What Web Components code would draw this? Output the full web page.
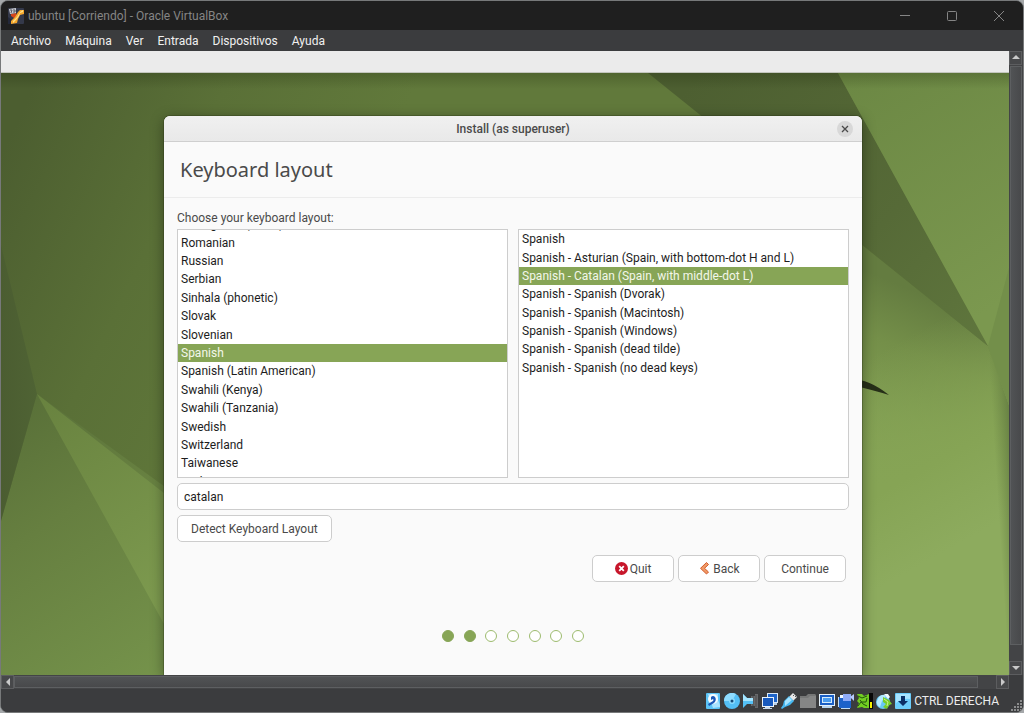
<!DOCTYPE html>
<html lang="es">
<head>
<meta charset="utf-8">
<meta name="viewport" content="width=device-width, initial-scale=1">
<title>ubuntu [Corriendo] - Oracle VirtualBox</title>
<style>
    html, body {
        height: 100%;
        margin: 0;
    }

    body {
        background: #a5a8aa;
        font-family: Roboto, "Open Sans", sans-serif;
        font-size: 12px;
    }
</style>
</head>
<body>

<vm-window>
    <vm-titlebar slot="top">ubuntu [Corriendo] - Oracle VirtualBox</vm-titlebar>
    <vm-menubar slot="top">
        <a href="#archivo">Archivo</a>
        <a href="#maquina">Máquina</a>
        <a href="#ver">Ver</a>
        <a href="#entrada">Entrada</a>
        <a href="#dispositivos">Dispositivos</a>
        <a href="#ayuda">Ayuda</a>
    </vm-menubar>

    <guest-desktop>
        <install-dialog>
            <span slot="title">Install (as superuser)</span>
            <span slot="heading">Keyboard layout</span>
            <keyboard-page></keyboard-page>
        </install-dialog>
    </guest-desktop>

    <vm-scrollbar slot="vbar" orientation="vertical"></vm-scrollbar>
    <vm-scrollbar slot="hbar" orientation="horizontal"></vm-scrollbar>
    <vm-statusbar slot="bottom">CTRL DERECHA</vm-statusbar>
</vm-window>

<script>
/* Host window: frame, guest viewport and both scrollbars */
class VmWindow extends HTMLElement {
    connectedCallback() {
        this.attachShadow({ mode: 'open' });
        this.shadowRoot.innerHTML = `
            <style>
                :host {
                    display: flex;
                    flex-direction: column;
                    box-sizing: border-box;
                    height: 100vh;
                    min-height: 640px;
                    border: 1px solid #77797a;
                    border-radius: 8px;
                    overflow: hidden;
                    background: #3b3c3e;
                }

                .viewport {
                    flex: 1;
                    min-height: 0;
                    display: grid;
                    grid-template-columns: minmax(0, 1fr) 14px;
                    grid-template-rows: minmax(0, 1fr) 14px;
                }
            </style>
            <slot name="top"></slot>
            <div class="viewport">
                <slot></slot>
                <slot name="vbar"></slot>
                <slot name="hbar"></slot>
            </div>
            <slot name="bottom"></slot>
        `;
    }
}
customElements.define('vm-window', VmWindow);

class VmTitlebar extends HTMLElement {
    connectedCallback() {
        this.attachShadow({ mode: 'open' });
        this.shadowRoot.innerHTML = `
            <style>
                :host {
                    display: flex;
                    align-items: center;
                    height: 29px;
                    padding: 0 1px 0 7px;
                    background: #1f1f1f;
                    color: #858585;
                }

                .title {
                    flex: 1;
                    margin-left: 4px;
                    white-space: nowrap;
                }

                button {
                    display: flex;
                    align-items: center;
                    justify-content: center;
                    width: 47px;
                    height: 29px;
                    padding: 0;
                    border: 0;
                    background: none;
                    color: #858585;
                }
            </style>
            <svg width="16" height="16" viewBox="0 0 16 16" aria-hidden="true">
                <rect width="16" height="16" rx="1" fill="#34394a"/>
                <path d="M0 9 L5 13 L3 16 H0Z" fill="#23283a"/>
                <path d="M3 6 L8 5 L9 9 L6 10 L3 8Z" fill="#d4471c"/>
                <path d="M16 2 V6 L12 7 L10 11 L9 15 L3 16 L3 13 L7 9 L10 4 L12 2Z" fill="#f5a72c"/>
                <path d="M15 2 L12 4 L9 9 L5 13 L5 15 L8 12 L11 8 L12 5 L15 4Z" fill="#ffe18a"/>
                <path d="M1 1 L8 0 L8 5 L2 6Z" fill="#c9cbd0"/>
                <path d="M2 2 L4 2 L3 5 M5 2 H7 V4 H5" stroke="#555862" fill="none"/>
            </svg>
            <span class="title"><slot></slot></span>
            <button type="button" aria-label="Minimizar">
                <svg width="10" height="10" viewBox="0 0 10 10"><path d="M0 4.500H10" stroke="currentColor" fill="none"/></svg>
            </button>
            <button type="button" aria-label="Maximizar">
                <svg width="10" height="10" viewBox="0 0 10 10"><rect x=".5" y=".5" width="9" height="9" rx="1" stroke="currentColor" fill="none"/></svg>
            </button>
            <button type="button" aria-label="Cerrar">
                <svg width="10" height="10" viewBox="0 0 10 10"><path d="M0 0L10 10M10 0L0 10" stroke="currentColor" fill="none"/></svg>
            </button>
        `;
    }
}
customElements.define('vm-titlebar', VmTitlebar);

class VmMenubar extends HTMLElement {
    connectedCallback() {
        this.attachShadow({ mode: 'open' });
        this.shadowRoot.innerHTML = `
            <style>
                :host {
                    display: block;
                    background: #3b3c3e;
                }

                nav {
                    display: flex;
                    align-items: center;
                    gap: 14px;
                    height: 21px;
                    padding: 0 10px;
                }

                ::slotted(a) {
                    color: #f0f0f0;
                    text-decoration: none;
                }
            </style>
            <nav><slot></slot></nav>
        `;
    }
}
customElements.define('vm-menubar', VmMenubar);

class VmScrollbar extends HTMLElement {
    connectedCallback() {
        const vertical = this.getAttribute('orientation') === 'vertical';
        const back = vertical ? 'M1 6L5 2L9 6Z' : 'M7 1L3 5L7 9Z';
        const next = vertical ? 'M1 3L5 7L9 3Z' : 'M3 1L7 5L3 9Z';

        this.attachShadow({ mode: 'open' });
        this.shadowRoot.innerHTML = `
            <style>
                :host {
                    display: flex;
                    background: #434446;
                }

                :host([orientation="vertical"]) {
                    flex-direction: column;
                }

                button {
                    flex: none;
                    display: flex;
                    align-items: center;
                    justify-content: center;
                    box-sizing: border-box;
                    width: 13px;
                    height: 14px;
                    padding: 0;
                    border: 1px solid #5c5d5f;
                    background: #47484a;
                }

                .thumb {
                    flex: 1;
                    box-sizing: border-box;
                    margin: 1px 0;
                    border: 1px solid #5d5f61;
                    background: linear-gradient(#515355, #48494b);
                }

                :host([orientation="vertical"]) .thumb {
                    margin: 1px;
                    background: linear-gradient(90deg, #515355, #48494b);
                }

                .rest {
                    flex: none;
                    width: 18px;
                    height: 15px;
                }
            </style>
            <button type="button" aria-label="Atrás">
                <svg width="10" height="10" viewBox="0 0 10 10"><path d="${back}" fill="#c9c9c9"/></svg>
            </button>
            <div class="thumb"></div>
            <div class="rest"></div>
            <button type="button" aria-label="Adelante">
                <svg width="10" height="10" viewBox="0 0 10 10"><path d="${next}" fill="#c9c9c9"/></svg>
            </button>
        `;
    }
}
customElements.define('vm-scrollbar', VmScrollbar);

/* Device indicators, left to right */
const DEVICES = [
    // hard disk
    `<rect x="1" y="0" width="14" height="16" rx="1" fill="#5cc4f7"/>
     <path d="M3 1H13V7L15 12V14L8 15Z" fill="#a8e3ff"/>
     <circle cx="8" cy="6" r="5" fill="#f4fbff"/>
     <path d="M6 4Q8 2 10 4Q12 7 9 10L4 13L3 11L8 8Q9 7 8 6L6 7Z" fill="#1b58b8"/>`,
    // optical disc
    `<circle cx="8" cy="8" r="8" fill="#54bff5"/>
     <path d="M0 8A8 8 0 0 1 12 1L8 8Z" fill="#8fdcff"/>
     <circle cx="8" cy="8" r="3" fill="#8cdcff"/>
     <circle cx="8" cy="8" r="1.500" fill="#174b78"/>`,
    // audio
    `<path d="M8 3H12V1H15V15H12V13H8Z" fill="#68696b"/>
     <path d="M10 3V13M13 2V14" stroke="#4b4c4e"/>
     <path d="M0 1L4 5H10V11H4L0 15Z" fill="#55c1f5"/>
     <path d="M0 1L4 5H10V8H0Z" fill="#a5e5ff"/>`,
    // network
    `<rect x="5" y="0" width="11" height="10" fill="#d9e8f7"/>
     <rect x="6" y="1" width="9" height="8" fill="#1e64c8"/>
     <path d="M12 10H15V12H12Z" fill="#b7cfe8"/>
     <rect x="0" y="4" width="12" height="10" fill="#e8f2fb"/>
     <rect x="1" y="5" width="10" height="8" fill="#1759bd"/>
     <path d="M3 14H8V15H10V16H1V15H3Z" fill="#c7d9ec"/>`,
    // usb
    `<path d="M8 4L12 0L16 4L12 8Z" fill="#e7e7e7"/>
     <path d="M12 3L13 2M14 4L15 3" stroke="#555"/>
     <path d="M3 8L8 3L13 8L9 12L4 14L1 16L0 15L2 12Z" fill="#47b8f1"/>
     <path d="M4 8L8 4L11 7L4 13Z" fill="#a6e4ff"/>`,
    // shared folders
    `<path d="M0 3H6L8 1H15L16 2V15H0Z" fill="#757676"/>
     <path d="M0 5H8L10 3H16V15H0Z" fill="#858686"/>`,
    // display
    `<rect x="0" y="1" width="16" height="12" fill="#e4f1fb"/>
     <rect x="1" y="2" width="14" height="10" fill="#1a5fc6"/>
     <rect x="3" y="4" width="10" height="6" fill="#d4ecfd"/>
     <rect x="4" y="5" width="8" height="4" fill="#4a9cf0"/>
     <path d="M3 13H13V15H3Z" fill="#b8d4ee"/>`,
    // recording
    `<rect x="1" y="4" width="12" height="11" fill="#1c62ca"/>
     <path d="M0 4H1V14H0ZM3 15H12V16H3Z" fill="#c3ddf5"/>
     <path d="M2 2H5V5H2Z" fill="#eef7ff"/>
     <rect x="5" y="1" width="8" height="7" fill="#8eabf8"/>
     <path d="M12 4L16 1V8Z" fill="#b8caff"/>`,
    // processor load
    `<path d="M0 1H5L7 3L12 1V15H7L5 14L0 15L2 10L0 8L2 5Z" fill="#72ce22"/>
     <path d="M1 3L5 5L10 3M1 13L4 9L9 9L10 5M3 7L6 11L10 13" stroke="#22540c" fill="none"/>
     <rect x="12" y="0" width="4" height="16" fill="#080808"/>
     <rect x="13" y="9" width="2" height="6" fill="#f6f000"/>`,
    // mouse integration
    `<circle cx="7" cy="9" r="7" fill="#68c9f5"/>
     <path d="M3 4Q7 0 10 3L6 8L4 14Q0 12 1 8Z" fill="#b5eaff"/>
     <path d="M8 1L12 1L14 4L12 6Z" fill="#f0faff"/>
     <path d="M7 4L13 7L16 11L13 12L11 16L7 14L10 11L7 9Z" fill="#77cf28"/>
     <path d="M8 6L12 9L11 13" stroke="#c9f48d" fill="none"/>`,
    // keyboard capture
    `<rect width="16" height="16" rx="1" fill="#6ccdfb"/>
     <path d="M1 1H15V6Q8 5 1 10Z" fill="#a9e4ff"/>
     <path d="M6 3H10V8H13L8 13L3 8H6Z" fill="#0b2f66"/>`
];

class VmStatusbar extends HTMLElement {
    connectedCallback() {
        this.attachShadow({ mode: 'open' });
        this.shadowRoot.innerHTML = `
            <style>
                :host {
                    display: flex;
                    align-items: center;
                    justify-content: flex-end;
                    gap: 3px;
                    box-sizing: border-box;
                    height: 23px;
                    padding-top: 1px;
                    background: #3b3c3e;
                    color: #ececec;
                }

                .grip {
                    align-self: flex-end;
                    margin-left: 9px;
                }
            </style>
            ${DEVICES.map(icon => `<svg width="16" height="16" viewBox="0 0 16 16" aria-hidden="true">${icon}</svg>`).join('')}
            <span><slot></slot></span>
            <svg class="grip" width="12" height="12" viewBox="0 0 12 12" aria-hidden="true">
                <path d="M9 0h2v2h-2zM6 3h2v2h-2zM9 3h2v2h-2zM3 6h2v2h-2zM6 6h2v2h-2zM9 6h2v2h-2zM0 9h2v2h-2zM3 9h2v2h-2zM6 9h2v2h-2zM9 9h2v2h-2z" fill="#8a8b8c"/>
            </svg>
        `;
    }
}
customElements.define('vm-statusbar', VmStatusbar);

/* Guest screen with the faceted green wallpaper */
class GuestDesktop extends HTMLElement {
    connectedCallback() {
        this.attachShadow({ mode: 'open' });
        this.shadowRoot.innerHTML = `
            <style>
                :host {
                    display: flex;
                    flex-direction: column;
                    min-height: 0;
                    overflow: hidden;
                }

                .panel {
                    flex: none;
                    height: 21px;
                    background: #ebebeb;
                    border-bottom: 1px solid #c3c6be;
                }

                .desk {
                    position: relative;
                    flex: 1;
                    min-height: 0;
                    display: flex;
                    padding: 43px 147px 0 163px;
                    overflow: hidden;
                }

                .wallpaper {
                    position: absolute;
                    inset: 0;
                    width: 100%;
                    height: 100%;
                }

                .shade {
                    position: absolute;
                    inset: 0 0 auto;
                    height: 16px;
                    background: linear-gradient(rgba(20, 30, 5, .22), rgba(20, 30, 5, 0));
                }

                ::slotted(*) {
                    flex: 1;
                    min-width: 0;
                }
            </style>
            <div class="panel"></div>
            <div class="desk">
                <svg class="wallpaper" viewBox="0 0 1008 602" preserveAspectRatio="none" aria-hidden="true">
                    <defs>
                        <linearGradient id="base" gradientUnits="userSpaceOnUse" x1="20" y1="40" x2="330" y2="190">
                            <stop offset="0" stop-color="#4c5e30"/>
                            <stop offset=".5" stop-color="#5a7037"/>
                            <stop offset="1" stop-color="#61793b"/>
                        </linearGradient>
                        <linearGradient id="low" gradientUnits="userSpaceOnUse" x1="0" y1="330" x2="170" y2="600">
                            <stop offset="0" stop-color="#586f38"/>
                            <stop offset=".4" stop-color="#667f40"/>
                            <stop offset="1" stop-color="#75934b"/>
                        </linearGradient>
                        <linearGradient id="ray" gradientUnits="userSpaceOnUse" x1="36" y1="321" x2="170" y2="530">
                            <stop offset="0" stop-color="#68823f"/>
                            <stop offset="1" stop-color="#7d9a4f"/>
                        </linearGradient>
                        <linearGradient id="left" x1="0" y1="0" x2="1" y2="0">
                            <stop offset="0" stop-color="#4b5d31"/>
                            <stop offset="1" stop-color="#4f6334"/>
                        </linearGradient>
                        <linearGradient id="dark" gradientUnits="userSpaceOnUse" x1="700" y1="0" x2="985" y2="270">
                            <stop offset="0" stop-color="#4d5f31"/>
                            <stop offset=".6" stop-color="#566a37"/>
                            <stop offset="1" stop-color="#5f763d"/>
                        </linearGradient>
                        <linearGradient id="light" gradientUnits="userSpaceOnUse" x1="860" y1="0" x2="1000" y2="230">
                            <stop offset="0" stop-color="#6c8844"/>
                            <stop offset="1" stop-color="#7b984f"/>
                        </linearGradient>
                        <linearGradient id="field" gradientUnits="userSpaceOnUse" x1="925" y1="223" x2="850" y2="400">
                            <stop offset="0" stop-color="#647c40"/>
                            <stop offset=".3" stop-color="#748f49"/>
                            <stop offset=".65" stop-color="#7f9c51"/>
                            <stop offset="1" stop-color="#86a456"/>
                        </linearGradient>
                        <linearGradient id="glow" gradientUnits="userSpaceOnUse" x1="860" y1="290" x2="960" y2="470">
                            <stop offset="0" stop-color="#86a455" stop-opacity="0"/>
                            <stop offset=".6" stop-color="#86a455"/>
                            <stop offset="1" stop-color="#8dab5e"/>
                        </linearGradient>
                        <linearGradient id="fold" gradientUnits="userSpaceOnUse" x1="987" y1="273" x2="1003" y2="272">
                            <stop offset="0" stop-color="#6f8a47" stop-opacity="0"/>
                            <stop offset="1" stop-color="#6a8445"/>
                        </linearGradient>
                    </defs>
                    <rect width="1008" height="602" fill="url(#base)"/>
                    <path d="M36 321L0 448V602H200V440Z" fill="url(#low)"/>
                    <path d="M36 321L200 449V618Z" fill="url(#ray)"/>
                    <path d="M0 172L36 321L0 448Z" fill="url(#left)"/>
                    <path d="M760 91L987 273L1008 332V602H760Z" fill="url(#field)"/>
                    <path d="M760 91L987 273L1008 332V602H760Z" fill="url(#glow)"/>
                    <path d="M987 273L1008 332V600Z" fill="url(#fold)"/>
                    <path d="M647 0H837L987 273Z" fill="url(#dark)"/>
                    <path d="M837 0H1008V332L987 273Z" fill="url(#light)"/>
                    <path d="M1008 195V332L987 273Z" fill="#738f4a"/>
                    <path d="M850 306Q868 306 888 322Q872 317 850 312Z" fill="#262f18"/>
                </svg>
                <div class="shade"></div>
                <slot></slot>
            </div>
        `;
    }
}
customElements.define('guest-desktop', GuestDesktop);

class InstallDialog extends HTMLElement {
    connectedCallback() {
        this.attachShadow({ mode: 'open' });
        this.shadowRoot.innerHTML = `
            <style>
                :host {
                    position: relative;
                    display: flex;
                    flex-direction: column;
                    border-radius: 6px 6px 0 0;
                    background: #fafafa;
                    box-shadow: 0 0 0 1px rgba(40, 50, 20, .3), 0 3px 14px rgba(0, 0, 0, .4);
                    color: #4a4a4a;
                }

                header {
                    display: grid;
                    grid-template-columns: 1fr auto 1fr;
                    align-items: center;
                    height: 25px;
                    padding: 0 9px;
                    border-bottom: 1px solid #cfcfcf;
                    border-radius: 6px 6px 0 0;
                    background: linear-gradient(#f0f0f0, #e9e9e9);
                    font-weight: 500;
                }

                .title {
                    grid-column: 2;
                }

                button {
                    justify-self: end;
                    display: flex;
                    align-items: center;
                    justify-content: center;
                    width: 16px;
                    height: 16px;
                    padding: 0;
                    border: 0;
                    border-radius: 50%;
                    background: #d8d8d8;
                    color: #4a4a4a;
                }

                h1 {
                    margin: 0;
                    padding: 0 16px;
                    border-bottom: 1px solid #ececec;
                    font-family: "Noto Sans", "Open Sans", sans-serif;
                    font-size: 20px;
                    font-weight: 400;
                    line-height: 55px;
                }
            </style>
            <header>
                <span class="title"><slot name="title"></slot></span>
                <button type="button" aria-label="Close">
                    <svg width="8" height="8" viewBox="0 0 8 8"><path d="M1 1L7 7M7 1L1 7" stroke="currentColor" stroke-width="1.300" fill="none"/></svg>
                </button>
            </header>
            <h1><slot name="heading"></slot></h1>
            <slot></slot>
        `;
    }
}
customElements.define('install-dialog', InstallDialog);

/* Single-choice list, one radio per row */
class LayoutList extends HTMLElement {
    connectedCallback() {
        const items = this.getAttribute('items').split('|');
        const selected = this.getAttribute('selected');
        const label = this.getAttribute('label');

        this.attachShadow({ mode: 'open' });
        this.shadowRoot.innerHTML = `
            <style>
                :host {
                    display: block;
                    box-sizing: border-box;
                    height: 249px;
                    overflow: hidden;
                    border: 1px solid #cdcdcd;
                    background: #fff;
                    color: #1d1d1d;
                }

                .rows {
                    display: grid;
                    grid-auto-rows: 1fr;
                    height: 147px;
                }

                /* scrolled down by most of a row */
                :host([scrolled]) .rows {
                    height: 276px;
                    margin-top: -15px;
                }

                label {
                    display: flex;
                    align-items: center;
                    min-height: 0;
                    padding: 0 3px;
                    line-height: 18px;
                    white-space: nowrap;
                }

                label:has(:checked) {
                    background: #87a556;
                    color: #f3f7ea;
                }

                input {
                    appearance: none;
                    width: 0;
                    height: 0;
                    margin: 0;
                }
            </style>
            <div class="rows" role="radiogroup" aria-label="${label}">
                ${items.map(item => `<label><input type="radio" name="layout" ${item === selected ? 'checked' : ''}>${item}</label>`).join('')}
            </div>
        `;
    }
}
customElements.define('layout-list', LayoutList);

class GtkButton extends HTMLElement {
    connectedCallback() {
        this.attachShadow({ mode: 'open' });
        this.shadowRoot.innerHTML = `
            <style>
                :host {
                    display: inline-flex;
                }

                button {
                    flex: 1;
                    display: flex;
                    align-items: center;
                    justify-content: center;
                    gap: 2px;
                    min-width: 82px;
                    height: 27px;
                    padding: 0 13px;
                    border: 1px solid #cdcdcd;
                    border-radius: 5px;
                    background: #fff;
                    color: #4a4a4a;
                    font: inherit;
                    white-space: nowrap;
                }
            </style>
            <button type="button"><slot name="icon"></slot><slot></slot></button>
        `;
    }
}
customElements.define('gtk-button', GtkButton);

class StepDots extends HTMLElement {
    connectedCallback() {
        const total = Number(this.getAttribute('total'));
        const done = Number(this.getAttribute('done'));

        this.attachShadow({ mode: 'open' });
        this.shadowRoot.innerHTML = `
            <style>
                :host {
                    display: flex;
                    justify-content: space-between;
                    width: 142px;
                }

                i {
                    box-sizing: border-box;
                    width: 12px;
                    height: 12px;
                    border: 1px solid #9dbb6e;
                    border-radius: 50%;
                    background: #fff;
                }

                .done {
                    border-color: #87a556;
                    background: #87a556;
                }
            </style>
            ${Array.from({ length: total }, (_, n) => `<i class="${n < done ? 'done' : ''}"></i>`).join('')}
        `;
    }
}
customElements.define('step-dots', StepDots);

class KeyboardPage extends HTMLElement {
    connectedCallback() {
        this.attachShadow({ mode: 'open' });
        this.shadowRoot.innerHTML = `
            <style>
                :host {
                    display: flex;
                    flex-direction: column;
                    padding: 11px 13px 0;
                }

                .prompt {
                    line-height: 18px;
                    margin-bottom: 2px;
                }

                .lists {
                    display: grid;
                    grid-template-columns: 1fr 1fr;
                    gap: 10px;
                }

                input {
                    box-sizing: border-box;
                    width: 100%;
                    height: 27px;
                    margin: 5px 0;
                    padding: 0 6px;
                    border: 1px solid #cdcdcd;
                    border-radius: 5px;
                    background: #fff;
                    color: #1d1d1d;
                    font: inherit;
                }

                .detect {
                    align-self: flex-start;
                }

                .actions {
                    display: flex;
                    justify-content: flex-end;
                    gap: 4px;
                    margin: 13px 3px 48px;
                }

                step-dots {
                    align-self: center;
                }
            </style>
            <label class="prompt" for="search">Choose your keyboard layout:</label>
            <div class="lists">
                <layout-list scrolled label="Language" selected="Spanish"
                    items="Portuguese (Brazil)|Romanian|Russian|Serbian|Sinhala (phonetic)|Slovak|Slovenian|Spanish|Spanish (Latin American)|Swahili (Kenya)|Swahili (Tanzania)|Swedish|Switzerland|Taiwanese|Tajik"></layout-list>
                <layout-list label="Variant" selected="Spanish - Catalan (Spain, with middle-dot L)"
                    items="Spanish|Spanish - Asturian (Spain, with bottom-dot H and L)|Spanish - Catalan (Spain, with middle-dot L)|Spanish - Spanish (Dvorak)|Spanish - Spanish (Macintosh)|Spanish - Spanish (Windows)|Spanish - Spanish (dead tilde)|Spanish - Spanish (no dead keys)"></layout-list>
            </div>
            <input id="search" type="text" value="catalan">
            <gtk-button class="detect">Detect Keyboard Layout</gtk-button>
            <div class="actions">
                <gtk-button>
                    <svg slot="icon" width="13" height="13" viewBox="0 0 13 13" aria-hidden="true">
                        <circle cx="6.500" cy="6.500" r="6.500" fill="#c7162b"/>
                        <path d="M4.200 4.200L8.800 8.800M8.800 4.200L4.200 8.800" stroke="#fff" stroke-width="1.800"/>
                    </svg>Quit</gtk-button>
                <gtk-button>
                    <svg slot="icon" width="13" height="13" viewBox="0 0 13 13" aria-hidden="true">
                        <path d="M8.500 .5L10.500 2.500L6.500 6.300L10.500 10L8.500 12L2.500 6.300Z" fill="#f09a66" stroke="#d35b2c"/>
                    </svg>Back</gtk-button>
                <gtk-button>Continue</gtk-button>
            </div>
            <step-dots total="7" done="2"></step-dots>
        `;
    }
}
customElements.define('keyboard-page', KeyboardPage);
</script>
</body>
</html>
